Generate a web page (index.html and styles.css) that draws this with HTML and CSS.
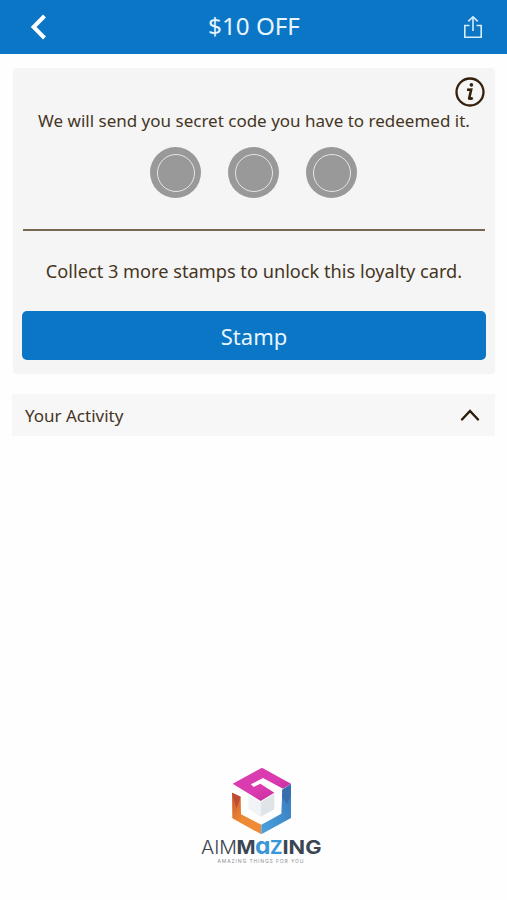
FILE: index.html
```html
<!DOCTYPE html>
<html lang="en">
<head>
    <meta charset="UTF-8">
    <meta name="viewport" content="width=device-width, initial-scale=1.0">
    <title>$10 OFF</title>
    <link rel="stylesheet" href="styles.css">
</head>
<body>
    <header class="header">
        <svg class="back" width="16" height="26" viewBox="0 0 16 26">
            <path d="M14.5 2 L3.6 13 L14.5 24" fill="none" stroke="#fff" stroke-width="4"/>
        </svg>
        <h1 class="title">$10 OFF</h1>
        <svg class="share" width="20" height="24" viewBox="0 0 20 24">
            <path d="M6.5 10.5 H1.8 V22.2 H18.2 V10.5 H13.5 M10 16 V2.2 M5.3 6.4 L10 1.8 L14.7 6.4" fill="none" stroke="#d8edfb" stroke-width="1.6"/>
        </svg>
    </header>

    <main>
        <section class="card">
            <svg class="info" width="30" height="30" viewBox="0 0 30 30">
                <circle cx="15" cy="15" r="13.5" fill="none" stroke="#35200b" stroke-width="2.3"/>
                <circle cx="16.4" cy="7.9" r="1.8" fill="#35200b"/>
                <path d="M12 12.8 L16.2 12.5 L14.1 21.6 Q14.6 22.4 17.8 21" fill="none" stroke="#35200b" stroke-width="2.5"/>
            </svg>
            <p class="message">We will send you secret code you have to redeemed it.</p>
            <div class="stamps">
                <div class="stamp"></div>
                <div class="stamp"></div>
                <div class="stamp"></div>
            </div>
            <hr class="line">
            <p class="collect">Collect 3 more stamps to unlock this loyalty card.</p>
            <button class="btn">Stamp</button>
        </section>

        <section class="activity">
            <span>Your Activity</span>
            <svg width="20" height="14" viewBox="0 0 20 14">
                <path d="M2 11.5 L10 3 L18 11.5" fill="none" stroke="#2b1a08" stroke-width="2.4" stroke-linecap="round"/>
            </svg>
        </section>
    </main>

    <footer class="footer">
        <svg width="130" height="105" viewBox="0 0 130 105">
            <defs>
                <linearGradient id="pink" x1="0" y1="0" x2="1" y2="1">
                    <stop offset="0" stop-color="#d63fae"/>
                    <stop offset="0.55" stop-color="#dc3ab0"/>
                    <stop offset="1" stop-color="#b42a95"/>
                </linearGradient>
                <linearGradient id="orange" x1="0" y1="0" x2="1" y2="1">
                    <stop offset="0" stop-color="#c95535"/>
                    <stop offset="0.5" stop-color="#ee8a32"/>
                    <stop offset="1" stop-color="#f08a3a"/>
                </linearGradient>
                <linearGradient id="blue" x1="0" y1="1" x2="1" y2="0">
                    <stop offset="0" stop-color="#49a3e2"/>
                    <stop offset="1" stop-color="#3978b9"/>
                </linearGradient>
            </defs>
            <g transform="translate(23 0) scale(0.33333)">
                <path d="M38 71 L126 23 L213 71 L189 86 L129 54 L93 73 L101 81 L121 71 L163 98 L122 123 Z" fill="url(#pink)"/>
                <path d="M36 98 L62 110 L63 163 L124 194 V223 L37 175 Z" fill="url(#orange)"/>
                <path d="M36 98 L62 110 L49 145 Z" fill="#bd4c35"/>
                <path d="M124 194 L184 161 L187 89 L213 72 V174 L124 223 Z" fill="url(#blue)"/>
                <path d="M187 89 L213 72 V105 L201 132 L186 112 Z" fill="#376fae"/>
                <path d="M84 103 L122 126 V170 L86 148 Z" fill="#f1f3f5"/>
                <path d="M122 126 L163 101 V148 L122 170 Z" fill="#dfe4e9"/>
            </g>
            <g class="brand">
                <text x="4" y="94" textLength="36" lengthAdjust="spacingAndGlyphs" class="thin">AIM</text>
                <text x="39.5" y="94" textLength="19" lengthAdjust="spacingAndGlyphs">M</text>
                <text x="58" y="94" textLength="15.5" lengthAdjust="spacingAndGlyphs" class="sky big">ɑ</text>
                <text x="73" y="94" textLength="12.5" lengthAdjust="spacingAndGlyphs" class="sky">Z</text>
                <text x="85.5" y="94" textLength="39" lengthAdjust="spacingAndGlyphs">ING</text>
            </g>
            <text x="20.5" y="102.5" textLength="86" class="tagline">AMAZING THINGS FOR YOU</text>
        </svg>
    </footer>
</body>
</html>
```

FILE: styles.css
```css
* {
    box-sizing: border-box;
}
body {
    font-family: "Noto Sans", sans-serif;
    margin: 0;
    min-height: 900px;
    background: #fefefe;
    color: #45351f;
    display: flex;
    flex-direction: column;
}
.header {
    height: 54px;
    padding: 0 24px 0 30px;
    background: #0b76c5;
    display: grid;
    grid-template-columns: 20px 1fr 20px;
    align-items: center;
}
.title {
    margin: 0;
    padding-right: 5px;
    color: #e7f5ff;
    font-size: 24.2px;
    font-weight: normal;
    line-height: 52px;
    height: 54px;
    text-align: center;
}
.card {
    position: relative;
    height: 306px;
    margin: 14px 12px 0 13px;
    padding: 41px 9px 0;
    background: #f5f5f5;
    border-radius: 4px;
    text-align: center;
}
.info {
    position: absolute;
    top: 9px;
    right: 10px;
}
.message {
    margin: 0;
    font-size: 17px;
    line-height: 24px;
    white-space: nowrap;
}
.stamps {
    display: flex;
    justify-content: center;
    gap: 27px;
    margin-top: 14px;
    padding-right: 1px;
}
.stamp {
    width: 51px;
    height: 51px;
    padding: 6.5px;
    border-radius: 50%;
    background: #999;
}
.stamp::before {
    content: "";
    display: block;
    box-sizing: border-box;
    height: 38px;
    border: 1.5px solid #e6e6e6;
    border-radius: 50%;
}
.line {
    height: 2px;
    margin: 31px 1px 0;
    border: none;
    background: #78674f;
}
.collect {
    margin: 28px 0 0;
    font-size: 18.2px;
    line-height: 25px;
    white-space: nowrap;
}
.btn {
    display: block;
    width: 100%;
    height: 49px;
    margin-top: 27px;
    padding: 0;
    border: none;
    border-radius: 5px;
    background: #0b76c5;
    color: #e7f5ff;
    font-family: inherit;
    font-size: 22px;
}
.activity {
    height: 42px;
    margin: 20px 12px 0;
    padding: 0 15px 0 13px;
    background: #f7f7f7;
    display: flex;
    align-items: center;
    justify-content: space-between;
    font-size: 17px;
}
.footer {
    margin-top: auto;
    padding: 0 0 35px 16px;
    display: flex;
    justify-content: center;
}
.footer svg {
    display: block;
}
.brand {
    font-family: Inter, sans-serif;
    font-size: 18.5px;
    font-weight: 700;
    fill: #3c4653;
}
.thin {
    font-weight: 300;
}
.sky {
    fill: #3b96d8;
}
.big {
    font-size: 24px;
}
.tagline {
    font-family: Inter, sans-serif;
    font-size: 5px;
    fill: #8c9299;
}
```
